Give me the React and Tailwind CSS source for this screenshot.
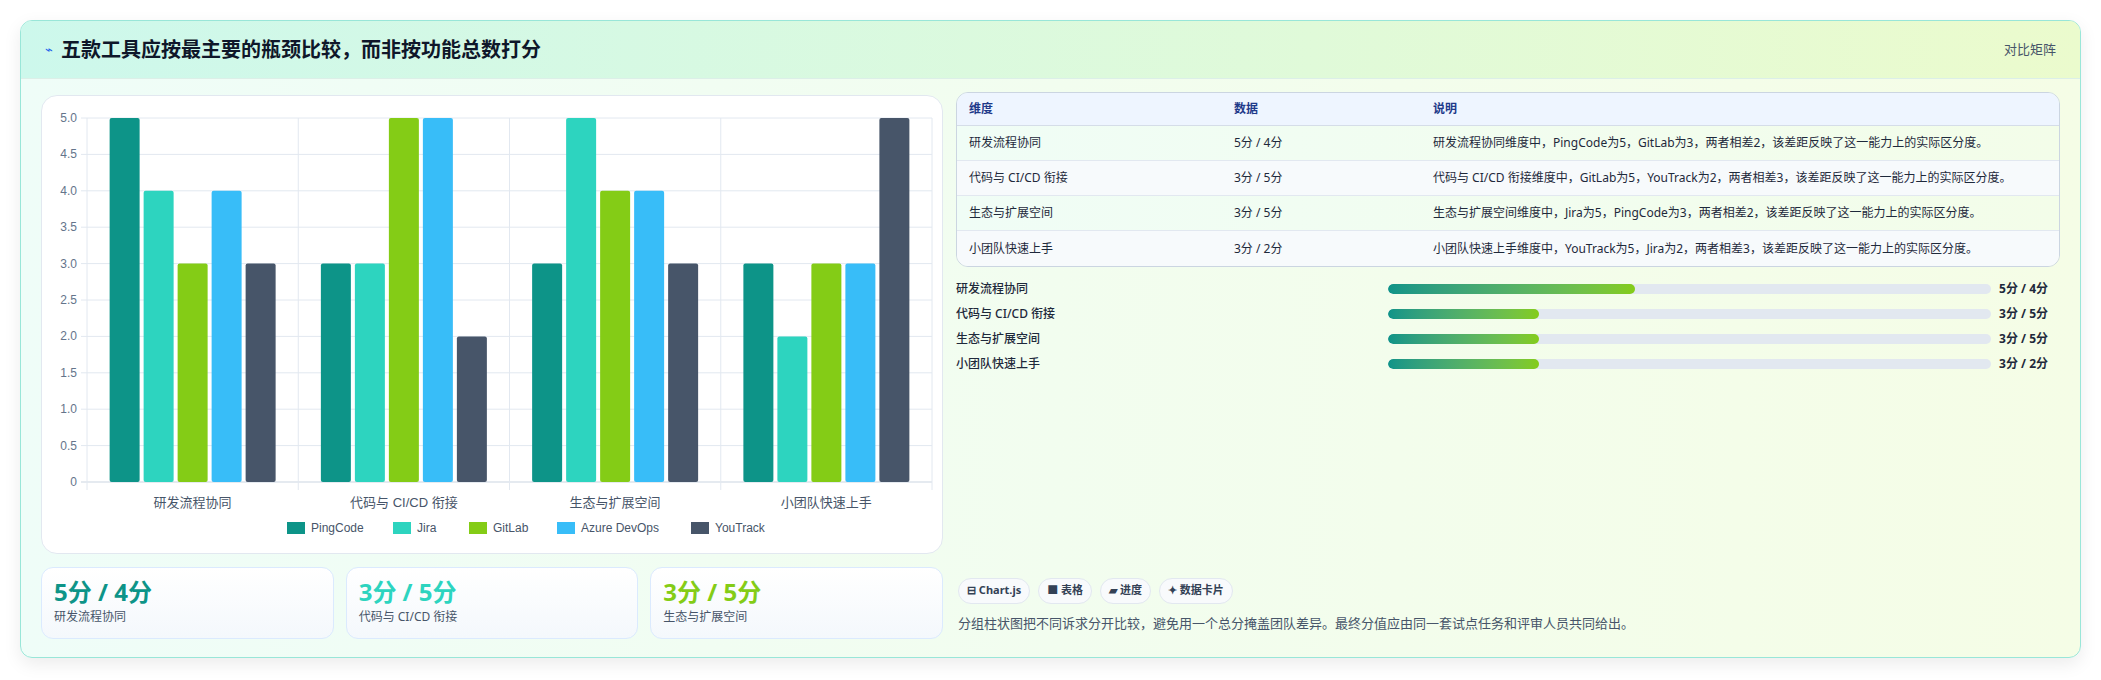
import React from "react";

const COLORS = ["#0d9488", "#2dd4bf", "#84cc16", "#38bdf8", "#475569"];
const NAMES = ["PingCode", "Jira", "GitLab", "Azure DevOps", "YouTrack"];
const CATS = ["研发流程协同", "代码与 CI/CD 衔接", "生态与扩展空间", "小团队快速上手"];
const DATA = [
  [5, 4, 3, 4, 3],
  [3, 3, 5, 5, 2],
  [3, 5, 4, 4, 3],
  [3, 2, 3, 3, 5],
];
const FONT = { fontFamily: '"Noto Sans", "Noto Sans CJK SC", sans-serif' };

function Chart() {
  const L = 45, R = 890, T = 22, B = 386;
  const gw = (R - L) / 4;
  const y = (v) => B - (v / 5) * (B - T);
  const ticks = [0, 0.5, 1, 1.5, 2, 2.5, 3, 3.5, 4, 4.5, 5];
  return (
    <svg width="900" height="455" style={{ fontFamily: '"Liberation Sans", "Noto Sans CJK SC", sans-serif' }}>
      {ticks.map((t) => (
        <g key={t}>
          <line x1={L - 6} x2={R} y1={y(t)} y2={y(t)} stroke={t === 0 ? "#cbd5e1" : "#e2e8f0"} strokeWidth="1" />
          <text x={L - 10} y={y(t) + 4} textAnchor="end" fontSize="12" fill="#64748b">{t === 0 ? "0" : t.toFixed(1)}</text>
        </g>
      ))}
      {[0, 1, 2, 3, 4].map((i) => (
        <line key={i} x1={L + i * gw} x2={L + i * gw} y1={T} y2={B + 8} stroke="#e2e8f0" />
      ))}
      {DATA.map((row, gi) =>
        row.map((v, bi) => {
          const bw = 30, gap = 4;
          const start = L + gi * gw + (gw - (5 * bw + 4 * gap)) / 2;
          const x = start + bi * (bw + gap);
          return <rect key={gi + "-" + bi} x={x} y={y(v)} width={bw} height={B - y(v)} rx="2" fill={COLORS[bi]} />;
        })
      )}
      {CATS.map((c, i) => (
        <text key={c} x={L + i * gw + gw / 2} y={411} textAnchor="middle" fontSize="13" fill="#475569">{c}</text>
      ))}
      <g>
        {(() => {
          let x = 245;
          const widths = [74, 44, 56, 102, 70];
          return NAMES.map((n, i) => {
            const g = (
              <g key={n}>
                <rect x={x} y={426} width={18} height={12} fill={COLORS[i]} />
                <text x={x + 24} y={436} fontSize="12" fill="#475569">{n}</text>
              </g>
            );
            x += widths[i] + 24 + 8;
            return g;
          });
        })()}
      </g>
    </svg>
  );
}

const ROWS = [
  ["研发流程协同", "5分 / 4分", "研发流程协同维度中，PingCode为5，GitLab为3，两者相差2，该差距反映了这一能力上的实际区分度。"],
  ["代码与 CI/CD 衔接", "3分 / 5分", "代码与 CI/CD 衔接维度中，GitLab为5，YouTrack为2，两者相差3，该差距反映了这一能力上的实际区分度。"],
  ["生态与扩展空间", "3分 / 5分", "生态与扩展空间维度中，Jira为5，PingCode为3，两者相差2，该差距反映了这一能力上的实际区分度。"],
  ["小团队快速上手", "3分 / 2分", "小团队快速上手维度中，YouTrack为5，Jira为2，两者相差3，该差距反映了这一能力上的实际区分度。"],
];

const PROG = [
  ["研发流程协同", 41, "5分 / 4分"],
  ["代码与 CI/CD 衔接", 25, "3分 / 5分"],
  ["生态与扩展空间", 25, "3分 / 5分"],
  ["小团队快速上手", 25, "3分 / 2分"],
];

export default function App() {
  return (
    <div className="w-[2101px] h-[680px] bg-white p-5" style={FONT}>
      <div className="rounded-xl border border-[#99e6d8] shadow-[0_6px_18px_rgba(0,0,0,0.08)] overflow-hidden bg-gradient-to-r from-[#effdf8] to-[#f5fde6]">
        <div className="h-[58px] flex items-center justify-between px-6 bg-gradient-to-r from-[#cdf8ec] to-[#ebfbcd] border-b border-[#dcefe8]">
          <div className="flex items-center gap-2">
            <span className="text-[13px] text-[#2563eb]">⌁</span>
            <span className="text-[20px] font-bold text-[#0f172a]">五款工具应按最主要的瓶颈比较，而非按功能总数打分</span>
          </div>
          <span className="text-[13px] text-[#475569]">对比矩阵</span>
        </div>
        <div className="flex gap-[13px] pl-5 pr-5 pt-4 pb-[18px]">
          <div className="w-[902px] flex flex-col gap-[13px]">
            <div className="h-[459px] rounded-2xl bg-white border border-[#e2e8f0] overflow-hidden">
              <Chart />
            </div>
            <div className="grid grid-cols-3 gap-3">
              {[
                ["5分 / 4分", "研发流程协同", "text-[#0d9488]"],
                ["3分 / 5分", "代码与 CI/CD 衔接", "text-[#2dd4bf]"],
                ["3分 / 5分", "生态与扩展空间", "text-[#84cc16]"],
              ].map(([v, l, c]) => (
                <div key={l} className="h-[72px] rounded-xl border border-[#dbeafe] bg-gradient-to-b from-white to-[#f4f8fc] px-3 pt-2">
                  <div className={"text-[24px] font-bold leading-[32px] " + c}>{v}</div>
                  <div className="text-[12px] text-[#475569]">{l}</div>
                </div>
              ))}
            </div>
          </div>
          <div className="flex-1 flex flex-col">
            <div className="mt-[-3px] rounded-xl border border-[#cbd5e1] overflow-hidden text-[12px] text-[#1e293b]">
              <div className="flex h-[33px] items-center bg-[#eef5ff] border-b border-[#d5dde8] text-[#1e3a8a] font-semibold">
                <div className="w-[277px] pl-3">维度</div>
                <div className="w-[199px]">数据</div>
                <div className="flex-1">说明</div>
              </div>
              {ROWS.map((r, i) => (
                <div key={i} className={"flex h-[35px] items-center " + (i < 3 ? "border-b border-[#e2e8f0] " : "") + (i % 2 === 0 ? "bg-gradient-to-r from-[#f0fdf6] to-[#f3fde9]" : "bg-[#f7fafc]")}>
                  <div className="w-[277px] pl-3">{r[0]}</div>
                  <div className="w-[199px]">{r[1]}</div>
                  <div className="flex-1">{r[2]}</div>
                </div>
              ))}
            </div>
            <div className="mt-[13px] flex flex-col gap-[7px] text-[12px] text-[#1e293b]">
              {PROG.map(([l, p, v]) => (
                <div key={l} className="flex items-center h-[18px]">
                  <div className="w-[432px] font-medium">{l}</div>
                  <div className="w-[603px] h-[10px] rounded-full bg-[#e2e8f0] overflow-hidden">
                    <div className="h-full rounded-full bg-gradient-to-r from-[#0d9488] to-[#84cc16]" style={{ width: p + "%" }} />
                  </div>
                  <div className="flex-1 text-right pr-[12px] font-bold">{v}</div>
                </div>
              ))}
            </div>
            <div className="flex-1" />
            <div className="flex gap-2 pl-[2px]">
              {["⊟ Chart.js", "■ 表格", "▰ 进度", "✦ 数据卡片"].map((t) => (
                <span key={t} className="h-[26px] px-2 flex items-center rounded-full border border-[#e2e8f0] bg-[#f8fafc] text-[11px] font-bold text-[#334155]">{t}</span>
              ))}
            </div>
            <div className="mt-[10px] mb-[6px] pl-[2px] text-[13px] text-[#475569]">分组柱状图把不同诉求分开比较，避免用一个总分掩盖团队差异。最终分值应由同一套试点任务和评审人员共同给出。</div>
          </div>
        </div>
      </div>
    </div>
  );
}
